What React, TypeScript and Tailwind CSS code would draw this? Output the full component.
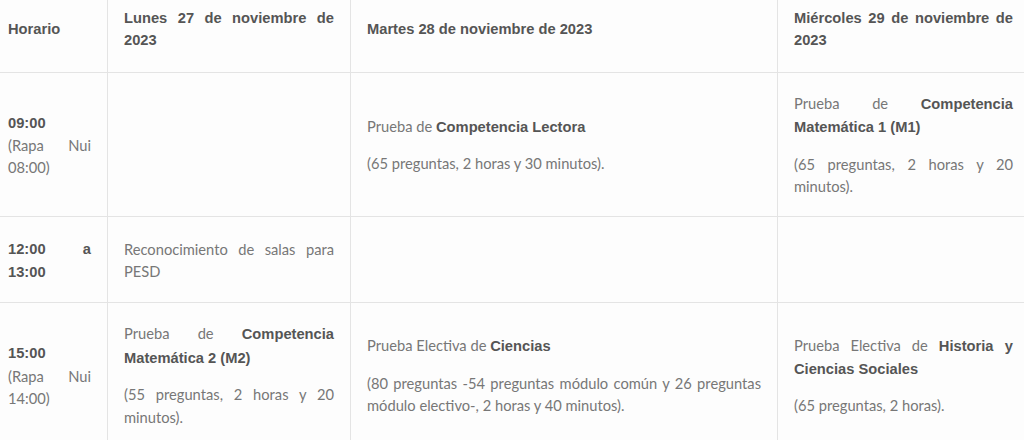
import React from "react";

function B({ children }: { children: React.ReactNode }) {
  return (
    <strong className="font-bold text-[#555555] [font-family:'Liberation_Sans',Arial,sans-serif]">
      {children}
    </strong>
  );
}

const th =
  "border border-[#e4e4e4] px-4 pt-[20px] pb-[20px] align-middle text-justify font-bold text-[#555555] [font-family:'Liberation_Sans',Arial,sans-serif]";
const td =
  "border border-[#e4e4e4] px-4 py-[19px] align-middle text-justify text-[#777777] [font-family:Lato,'Open_Sans',sans-serif]";

export default function App() {
  return (
    <div className="w-[1024px] h-[440px] overflow-hidden bg-[#fdfdfd]">
      <div className="-ml-[9px] -mt-[14px]">
        <table className="table-fixed border-collapse w-[1038px] text-[14.7px] leading-[22.4px]">
          <colgroup>
            <col className="w-[116px]" />
            <col className="w-[243px]" />
            <col className="w-[427px]" />
            <col className="w-[252px]" />
          </colgroup>
          <thead>
            <tr>
              <th className={th}>Horario</th>
              <th className={th}>Lunes 27 de noviembre de 2023</th>
              <th className={th}>Martes 28 de noviembre de 2023</th>
              <th className={th}>Miércoles 29 de noviembre de 2023</th>
            </tr>
          </thead>
          <tbody>
            <tr>
              <td className={td}>
                <B>09:00</B>
                <br />
                (Rapa Nui 08:00)
              </td>
              <td className={td}></td>
              <td className={td}>
                <p className="mb-[14px]">
                  Prueba de <B>Competencia Lectora</B>
                </p>
                <p>(65 preguntas, 2 horas y 30 minutos).</p>
              </td>
              <td className={td}>
                <p className="mb-[14px]">
                  Prueba de <B>Competencia Matemática 1 (M1)</B>
                </p>
                <p>(65 preguntas, 2 horas y 20 minutos).</p>
              </td>
            </tr>
            <tr>
              <td className={`${td} h-[86px]`}>
                <B>12:00 a 13:00</B>
              </td>
              <td className={td}>Reconocimiento de salas para PESD</td>
              <td className={td}></td>
              <td className={td}></td>
            </tr>
            <tr>
              <td className={td}>
                <B>15:00</B>
                <br />
                (Rapa Nui 14:00)
              </td>
              <td className={td}>
                <p className="mb-[14px]">
                  Prueba de <B>Competencia Matemática 2 (M2)</B>
                </p>
                <p>(55 preguntas, 2 horas y 20 minutos).</p>
              </td>
              <td className={td}>
                <p className="mb-[14px]">
                  Prueba Electiva de <B>Ciencias</B>
                </p>
                <p>
                  (80 preguntas -54 preguntas módulo común y 26 preguntas módulo electivo-, 2
                  horas y 40 minutos).
                </p>
              </td>
              <td className={td}>
                <p className="mb-[14px]">
                  Prueba Electiva de <B>Historia y Ciencias Sociales</B>
                </p>
                <p>(65 preguntas, 2 horas).</p>
              </td>
            </tr>
          </tbody>
        </table>
      </div>
    </div>
  );
}
